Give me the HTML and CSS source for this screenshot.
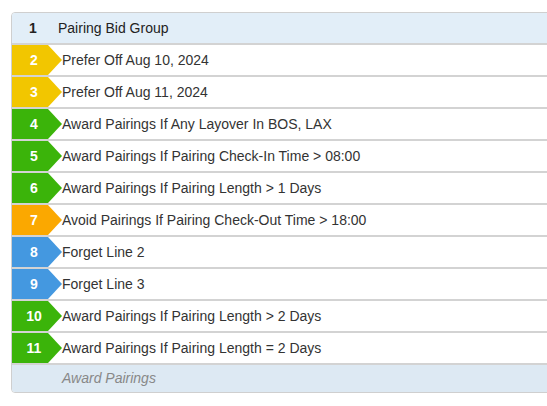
FILE: index.html
```html
<!DOCTYPE html>
<html>
<head>
<meta charset="utf-8">
<link rel="stylesheet" href="styles.css">
</head>
<body>
<div class="panel">
  <div class="head">
    <span class="head-num">1</span>
    <span class="head-title">Pairing Bid Group</span>
  </div>
  <div class="row"><span class="badge yellow">2</span><span class="label">Prefer Off Aug 10, 2024</span></div>
  <div class="row"><span class="badge yellow">3</span><span class="label">Prefer Off Aug 11, 2024</span></div>
  <div class="row"><span class="badge green">4</span><span class="label">Award Pairings If Any Layover In BOS, LAX</span></div>
  <div class="row"><span class="badge green">5</span><span class="label">Award Pairings If Pairing Check-In Time &gt; 08:00</span></div>
  <div class="row"><span class="badge green">6</span><span class="label">Award Pairings If Pairing Length &gt; 1 Days</span></div>
  <div class="row"><span class="badge orange">7</span><span class="label">Avoid Pairings If Pairing Check-Out Time &gt; 18:00</span></div>
  <div class="row"><span class="badge blue">8</span><span class="label">Forget Line 2</span></div>
  <div class="row"><span class="badge blue">9</span><span class="label">Forget Line 3</span></div>
  <div class="row"><span class="badge green">10</span><span class="label">Award Pairings If Pairing Length &gt; 2 Days</span></div>
  <div class="row"><span class="badge green">11</span><span class="label">Award Pairings If Pairing Length = 2 Days</span></div>
  <div class="foot">Award Pairings</div>
</div>
</body>
</html>
```
FILE: styles.css
```css
html, body {
  margin: 0;
  padding: 0;
  overflow: hidden;
  background: #fff;
}
body {
  padding: 12px 0 0 11px;
  font-family: "Liberation Sans", Arial, sans-serif;
  font-size: 14px;
  color: #333;
}
.panel {
  width: 560px;
  border: 1px solid #cfcfcf;
  border-radius: 4px;
  overflow: hidden;
}
.head {
  display: flex;
  align-items: center;
  height: 30px;
  background: #e2eef8;
  border-bottom: 2px solid #d3d3d3;
}
.head-num {
  width: 42px;
  text-align: center;
  font-weight: bold;
  color: #222;
}
.head-title {
  padding-left: 4px;
  color: #222;
}
.row {
  display: flex;
  align-items: center;
  height: 30px;
  border-bottom: 2px solid #d3d3d3;
}
.badge {
  flex: none;
  width: 50px;
  height: 30px;
  box-sizing: border-box;
  padding-right: 6px;
  display: flex;
  align-items: center;
  justify-content: center;
  color: #fff;
  font-weight: bold;
  font-size: 14px;
  clip-path: polygon(0 0, 36px 0, 50px 50%, 36px 100%, 0 100%);
}
.yellow { background: #f2c600; }
.green { background: #3bb40a; }
.orange { background: #fba800; }
.blue { background: #4498e0; }
.label {
  color: #333;
}
.foot {
  height: 27px;
  line-height: 27px;
  background: #dde9f3;
  padding-left: 50px;
  font-style: italic;
  color: #888;
}
```
